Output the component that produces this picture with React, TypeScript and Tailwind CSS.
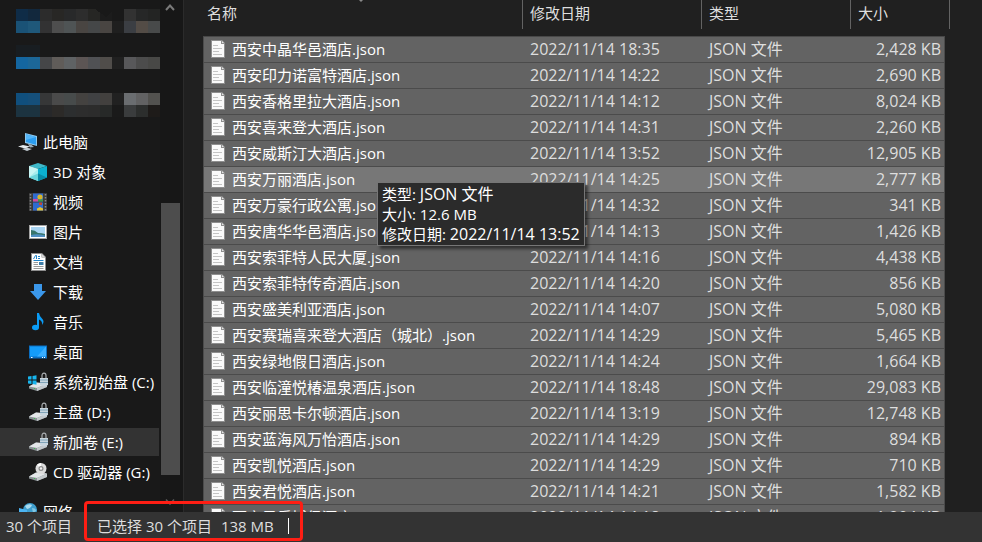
import type { ReactNode } from "react";

const files: [string, string, string][] = [
  ["西安中晶华邑酒店", "18:35", "2,428"],
  ["西安印力诺富特酒店", "14:22", "2,690"],
  ["西安香格里拉大酒店", "14:12", "8,024"],
  ["西安喜来登大酒店", "14:31", "2,260"],
  ["西安威斯汀大酒店", "13:52", "12,905"],
  ["西安万丽酒店", "14:25", "2,777"],
  ["西安万豪行政公寓", "14:32", "341"],
  ["西安唐华华邑酒店", "14:13", "1,426"],
  ["西安索菲特人民大厦", "14:16", "4,438"],
  ["西安索菲特传奇酒店", "14:20", "856"],
  ["西安盛美利亚酒店", "14:07", "5,080"],
  ["西安赛瑞喜来登大酒店（城北）", "14:29", "5,465"],
  ["西安绿地假日酒店", "14:24", "1,664"],
  ["西安临潼悦椿温泉酒店", "18:48", "29,083"],
  ["西安丽思卡尔顿酒店", "13:19", "12,748"],
  ["西安蓝海风万怡酒店", "14:29", "894"],
  ["西安凯悦酒店", "14:29", "710"],
  ["西安君悦酒店", "14:21", "1,582"],
  ["西安君乐城堡酒店", "14:18", "1,204"],
];

const mosaic: [number, string[]][] = [
  [9, ["#0f2c47", "#12283d", "#2c2c2c", "#282725", "#28292a", "#2d2d2d", "#262624", "#1c1c1c", "#191919", "#323232", "#262727", "#232423"]],
  [21, ["#1a5276", "#1f587a", "#323233", "#4e4e4e", "#4f5455", "#494542", "#454748", "#494542", "#1f1f1f", "#3b3e43", "#534c46", "#484a4a"]],
  [45, ["#181d21", "#181d21"]],
  [57, ["#1466a0", "#1c6798", "#454648", "#605c59", "#5f6264", "#5c5554", "#505154", "#504d4a", "#202020", "#58585a", "#4c4c4c", "#484846"]],
  [93, ["#104f7d", "#154f7a", "#363738", "#4a4a4a", "#474b4b", "#444240", "#404143", "#42403e", "#212121", "#6a6d70", "#626263", "#53524f"]],
  [105, ["#1c3340", "#1c3340", "#27282a", "#2c2a28", "#2c2e2f", "#2d2d2d", "#2c2c2c", "#272928", "#1a1a1a", "#3a3c3d", "#2c2e2d", "#1e1b19"]],
];

function Icon({ children }: { children: ReactNode }) {
  return (
    <svg viewBox="0 0 20 20" className="size-5 shrink-0" aria-hidden="true">
      {children}
    </svg>
  );
}

const PcIcon = () => (
  <Icon>
    <path d="M7 1 L19 4 L19 14 L7 11 Z" fill="#8ec9ee" />
    <path d="M8 2.3 L18 4.9 L18 12.8 L8 10.1 Z" fill="#2b9df0" />
    <path d="M8 2.3 L18 4.9 L8 8 Z" fill="#55b6f8" />
    <path d="M10 12 L13 12.6 L16 15 L12 15.5 Z" fill="#9fb0bb" />
    <path d="M0 14.5 L5 13 L12 14.6 L7 16.4 Z" fill="#e5ebef" />
    <path d="M4 17 L9 15.8 L14 17 L9 19 Z" fill="#c2ccd3" />
  </Icon>
);
const CubeIcon = () => (
  <Icon>
    <path d="M1 4 L10 1 L19 4 L10 7 Z" fill="#3fb9c9" />
    <path d="M1 4 L10 7 L10 19 L1 15.5 Z" fill="#a5ecee" />
    <path d="M19 4 L10 7 L10 19 L19 15.5 Z" fill="#0bb0cf" />
    <path d="M1 15.5 L10 11.5 L10 19 Z" fill="#6bd5dc" />
    <path d="M19 15.5 L10 11.5 L10 19 Z" fill="#098ba6" />
    <path d="M1 4 L10 7 L1 15.5 Z" fill="#c8f5f4" />
  </Icon>
);
const VideoIcon = () => (
  <Icon>
    <path d="M1 1 H19 V19 H1 Z" fill="#3b3b3b" />
    <path d="M2.5 2 V19 M17.5 2 V19" stroke="#8a8a8a" strokeWidth="1.5" strokeDasharray="1.5 1.5" />
    <path d="M5 1.5 H15 V9.5 H5 Z M5 10.5 H15 V18.5 H5 Z" fill="#2f6bd0" />
    <circle cx="12" cy="5" r="2.6" fill="#d8b62a" />
    <path d="M5 7 H10 V9.5 H5 Z" fill="#d2489b" />
    <path d="M10 7.5 H15 V9.5 H10 Z" fill="#3f9b45" />
    <path d="M11 10.5 H14 V13 H11 Z" fill="#c24a32" />
    <path d="M9 16.5 L12 15 L15 16.5 V18.5 H9 Z" fill="#e6c331" />
  </Icon>
);
const PictureIcon = () => (
  <Icon>
    <path d="M1 3 H19 V17 H1 Z" fill="#a4a4a4" />
    <path d="M2 4 H18 V16 H2 Z" fill="#fff" />
    <path d="M3 5 H17 V15 H3 Z" fill="#a9d5f2" />
    <path d="M3 8 Q7 8 10 11 Q14 11 17 12 V15 H3 Z" fill="#37756b" />
    <path d="M3 13 Q9 11.5 17 13.5 V15 H3 Z" fill="#4f8fc2" />
  </Icon>
);
const DocIcon = () => (
  <Icon>
    <path d="M3 1 H14 L18 5 V19 H3 Z" fill="#8d8d8d" />
    <path d="M4 2 H13.5 V5.5 H17 V18 H4 Z" fill="#fff" />
    <path d="M14 2 V5 H17 Z" fill="#d7d7d7" />
    <path d="M5.5 7 L7.5 3.5 H8.5 V7 M10 4.5 H12 M10 6.5 H12 M5.5 8.5 H15.5" stroke="#2184c8" fill="none" />
    <path d="M5.5 10.5 H10 M5.5 12.5 H10 M5.5 14.5 H15.5 M5.5 16.5 H15.5" stroke="#9a9a9a" />
    <path d="M11 10 H15.5 V13 H11 Z" fill="#3f7ea8" />
  </Icon>
);
const DownloadIcon = () => (
  <Icon>
    <path d="M6 2 H14 V9 H18 L10 18 L2 9 H6 Z" fill="#3b97ea" />
  </Icon>
);
const MusicIcon = () => (
  <Icon>
    <ellipse cx="7.5" cy="15.5" rx="3.5" ry="2.7" fill="#0a9bf5" />
    <path d="M9 1 H11 Q11.5 4.5 14 6.5 Q17 9.5 14 13 Q14.8 9 11 7.5 V15.5 H9 Z" fill="#0a9bf5" />
  </Icon>
);
const DesktopIcon = () => (
  <Icon>
    <path d="M1 3.5 H19 V16.5 H1 Z" fill="#0b6fc2" />
    <path d="M2 4.5 H18 V14.5 H2 Z" fill="#149cf9" />
    <path d="M18 4.5 V14.5 H9 Z" fill="#3aaeff" />
    <path d="M3 15 H4.5 V16 H3 Z M14 15 H15 V16 H14 Z M16 15 H17 V16 H16 Z" fill="#fff" />
  </Icon>
);
const DriveIcon = ({ kind }: { kind: "win" | "lock" | "cd" }) => (
  <Icon>
    <path d="M1 14.5 L8 10.5 L19 11.5 V15 L9 19 L1 16.5 Z" fill="#8d9498" />
    <path d="M1 14.5 L8 10.5 L19 11.5 L9 16 Z" fill="#e3e6e8" />
    <path d="M9 16 L19 11.5 V15 L9 19 Z" fill="#c3c8cb" />
    <path d="M6.5 16 V17" stroke="#39c34a" />
    {kind === "cd" ? (
      <>
        <circle cx="13" cy="6.5" r="5.5" fill="#dcdcdc" />
        <path d="M13 6.5 L9 2.7 A5.5 5.5 0 0 1 13 1 Z" fill="#fff" />
        <circle cx="13" cy="6.5" r="2.5" fill="#8b8b8b" />
        <circle cx="13" cy="6.5" r="1.2" fill="#f4f4f4" />
      </>
    ) : (
      <>
        <path d="M14 7 V3.5 Q14 1.2 16 1.2 Q18 1.2 18 3.5 V7" stroke="#a9adb0" strokeWidth="1.2" fill="none" />
        <path d="M12 6 H20 V13 L16 14.5 L12 13 Z" fill="#c9d6de" />
        <path d="M12 8 H20 M12 10.5 H20" stroke="#7fa3b8" />
      </>
    )}
    {kind === "win" && (
      <path d="M0 4.5 L3.5 4 V7.5 H0 Z M4.5 3.9 L8.5 3.3 V7.5 H4.5 Z M0 8.5 H3.5 V12 L0 11.5 Z M4.5 8.5 H8.5 V12.7 L4.5 12.1 Z" fill="#17b5ee" />
    )}
  </Icon>
);
const NetworkIcon = () => (
  <Icon>
    <circle cx="12" cy="8" r="7" fill="#3f9fce" />
    <path d="M7 4 Q11 1 14 3 Q13 6 9 7 Z" fill="#a9daee" />
    <path d="M14 6 Q18 6 18 9 L15 11 Z" fill="#84c7e3" />
    <path d="M1 6 L9 8 V15 L1 13 Z" fill="#4cb4f2" />
  </Icon>
);
const FileIcon = () => (
  <svg viewBox="0 0 14 18" className="h-[18px] w-[14px] shrink-0" aria-hidden="true">
    <path d="M0 0 H11 L14 3 V18 H0 Z" fill="#8f8f8f" />
    <path d="M1 1 H10 V4 H13 V17 H1 Z" fill="#fafafa" />
    <path d="M11 1 V3 H13 Z" fill="#e6e6e6" />
    <path d="M2 5.5 H7 M2 8.5 H11 M2 11.5 H8 M2 14.5 H11" stroke="#c4c4c4" />
  </svg>
);

const places: { label: string; icon: ReactNode; active?: boolean }[] = [
  { label: "3D 对象", icon: <CubeIcon /> },
  { label: "视频", icon: <VideoIcon /> },
  { label: "图片", icon: <PictureIcon /> },
  { label: "文档", icon: <DocIcon /> },
  { label: "下载", icon: <DownloadIcon /> },
  { label: "音乐", icon: <MusicIcon /> },
  { label: "桌面", icon: <DesktopIcon /> },
  { label: "系统初始盘 (C:)", icon: <DriveIcon kind="win" /> },
  { label: "主盘 (D:)", icon: <DriveIcon kind="lock" /> },
  { label: "新加卷 (E:)", icon: <DriveIcon kind="lock" />, active: true },
  { label: "CD 驱动器 (G:)", icon: <DriveIcon kind="cd" /> },
];

function Sidebar() {
  return (
    <aside className="flex w-[184px] shrink-0 overflow-hidden border-r border-[#2b2b2b] bg-[#191919]">
      <nav className="w-40 shrink-0 text-white">
        <svg viewBox="0 0 160 128" className="block h-32 w-40" aria-hidden="true" shapeRendering="crispEdges">
          {mosaic.map(([y, colors]) =>
            colors.map((c, i) => <rect key={`${y}-${i}`} x={16 + i * 12} y={y} width="12" height="12" fill={c} />),
          )}
          <path d="M95 9 H112 V12 L106 17 L102 14 Z" fill="#191919" />
        </svg>
        <ul className="flex flex-col gap-0.5">
          <li>
            <a href="#pc" className="flex h-7 items-center gap-[5px] pl-[18px]">
              <PcIcon />
              此电脑
            </a>
          </li>
          {places.map((p) => (
            <li key={p.label}>
              <a
                href="#place"
                className={`mr-px flex h-7 items-center gap-[5px] whitespace-nowrap pl-7 ${p.active ? "bg-[#333333]" : ""}`}
              >
                {p.icon}
                {p.label}
              </a>
            </li>
          ))}
          <li className="pt-2.5">
            <a href="#network" className="flex h-7 items-center gap-[5px] pl-[18px]">
              <NetworkIcon />
              网络
            </a>
          </li>
        </ul>
      </nav>
      <div className="flex flex-1 flex-col items-center bg-[#171717] pt-[3px] pr-[3px]">
        <svg viewBox="0 0 10 8" className="h-2 w-2.5" aria-hidden="true">
          <path d="M1 7 L5 2.5 L9 7" fill="none" stroke="#7a7a7a" strokeWidth="2" />
        </svg>
        <div className="mt-48 h-[272px] w-[19px] bg-[#4d4d4d]" />
        <svg viewBox="0 0 10 8" className="mt-[23px] h-2 w-2.5" aria-hidden="true">
          <path d="M1 1.5 L5 6 L9 1.5" fill="none" stroke="#5a5a5a" strokeWidth="1.5" />
        </svg>
      </div>
    </aside>
  );
}

function FileTable() {
  return (
    <table className="w-full table-fixed border-separate border-spacing-0 whitespace-nowrap">
      <colgroup>
        <col />
        <col className="w-[179px]" />
        <col className="w-[149px]" />
        <col className="w-[94px]" />
        <col className="w-[5px]" />
      </colgroup>
      <thead>
        <tr className="h-[29px] text-left text-[#dedede] *:border-r *:border-[#636363] *:p-0 *:pb-1 *:font-normal">
          <th>
            <button type="button" className="pl-1">名称</button>
          </th>
          <th>
            <button type="button" className="pl-[7px]">修改日期</button>
          </th>
          <th>
            <button type="button" className="pl-[7px]">类型</button>
          </th>
          <th colSpan={2}>
            <button type="button" className="pl-[7px]">大小</button>
          </th>
        </tr>
        <tr className="h-2">
          <td colSpan={4} className="border-b border-[#484848]" />
          <td />
        </tr>
      </thead>
      <tbody>
        {files.map(([name, time, size], i) => (
          <tr
            key={name}
            className={`h-[26px] text-[#dedede] *:border-b *:border-[#4b4b4b] *:p-0 *:pb-0.5 ${i === 5 ? "*:bg-[#777777]" : "*:bg-[#636363]"}`}
          >
            <td className="border-l text-white">
              <div className="flex items-center gap-[7px] pl-[7px]">
                <FileIcon />
                {name}.json
              </div>
            </td>
            <td>
              <div className="pl-[7px] text-base/5">2022/11/14 {time}</div>
            </td>
            <td>
              <div className="pl-[7px] text-base/5">JSON 文件</div>
            </td>
            <td className="border-r">
              <div className="pr-[3px] text-right text-base/5">{size} KB</div>
            </td>
          </tr>
        ))}
      </tbody>
    </table>
  );
}

export default function App() {
  return (
    <div className="relative flex h-screen flex-col overflow-hidden bg-[#202020] font-['Open_Sans','Noto_Sans_CJK_SC',sans-serif] text-[15px]/5">
      <div className="flex min-h-0 flex-1">
        <Sidebar />
        <main className="relative min-w-0 flex-1 overflow-hidden pr-8 pl-[19px]">
          <FileTable />
          <svg viewBox="0 0 6 3" className="absolute top-0 left-[174px] h-[3px] w-1.5" aria-hidden="true">
            <path d="M1 0 H5 L3 2 Z" fill="#8a8a8a" />
          </svg>
          <div
            role="tooltip"
            className="absolute top-[182px] left-[193px] border border-[#767676] bg-[#2b2b2b] px-1 pt-px pb-px whitespace-nowrap text-white shadow-[3px_3px_3px_rgba(0,0,0,0.5)]"
          >
            <p>
              类型: <span className="text-base/5">JSON 文件</span>
            </p>
            <p>大小: 12.6 MB</p>
            <p>
              修改日期: <span className="text-base/5">2022/11/14 13:52</span>
            </p>
          </div>
        </main>
      </div>
      <footer className="flex h-[30px] shrink-0 items-center bg-[#333333] pb-0.5 pl-1.5 text-[#dedede]">
        <span className="w-[91px]">30 个项目</span>
        <span>已选择 30 个项目</span>
        <span className="pl-[9px]">138 MB</span>
        <span className="ml-3.5 h-4 w-px bg-white" />
      </footer>
      <div className="pointer-events-none absolute bottom-px left-[84px] h-10 w-[219px] rounded border-3 border-[#ff1e14]" />
    </div>
  );
}
